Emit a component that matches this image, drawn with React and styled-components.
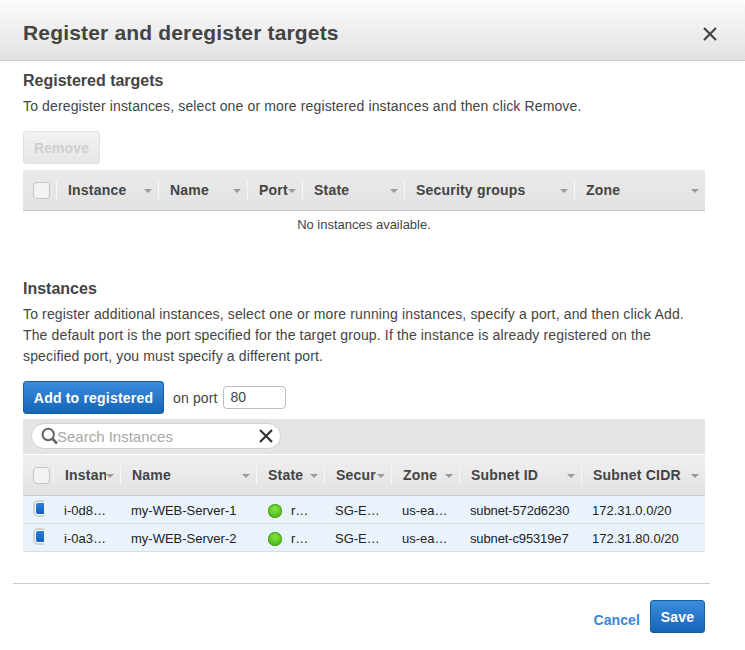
import React from "react"
import styled, { createGlobalStyle } from "styled-components"

const GlobalStyle = createGlobalStyle`
    html, body {
        margin: 0;
        padding: 0;
        background: #fff;
        font-family: "Liberation Sans", Arial, sans-serif;
        color: #444;
    }
`

const Modal = styled.div`
    width: 745px;
    height: 650px;
    overflow: hidden;
    background: #fff;
    display: flex;
    flex-direction: column;
`

const Header = styled.div`
    height: 60px;
    box-sizing: content-box;
    border-bottom: 1px solid #ccc;
    border-radius: 6px 6px 0 0;
    background: linear-gradient(to bottom, #fbfbfb, #e2e2e2);
    padding: 0 23px;
    display: flex;
    align-items: center;
    justify-content: space-between;
`

const Title = styled.h2`
    margin: 6px 0 0;
    font-size: 21px;
    font-weight: 700;
    line-height: 24px;
    letter-spacing: 0.17px;
    color: #444;
`

const Close = styled.svg`
    width: 14px;
    height: 14px;
    margin: 7px 5px 0 0;
`

const Body = styled.div`
    padding: 9px 40px 0 23px;
    width: 682px;
    box-sizing: content-box;
`

const Heading = styled.h3`
    margin: 0;
    padding-top: 1px;
    font-size: 16px;
    line-height: 20px;
    font-weight: 700;
    color: #444;
`

const Text = styled.p`
    margin: 5px 0 0;
    font-size: 14px;
    line-height: 21px;
    letter-spacing: 0.14px;
    color: #444;
`

const RemoveButton = styled.button`
    display: block;
    width: 77px;
    height: 33px;
    margin: 14px 0 6px;
    padding: 0;
    border: 1px solid #e0e0e0;
    border-radius: 3px;
    background: linear-gradient(to bottom, #f2f2f2, #e6e6e6);
    color: #cfcfcf;
    font: 700 14px "Liberation Sans", Arial, sans-serif;
    letter-spacing: 0.1px;
`

const HeadRow = styled.div`
    display: grid;
    grid-template-columns: ${(props) => props.$cols};
    height: 40px;
    box-sizing: content-box;
    align-items: center;
    border-bottom: 1px solid #c8c8c8;
    background: ${(props) => props.$plain
        ? "linear-gradient(to bottom, #f0f0f0, #e2e2e2)"
        : "linear-gradient(to bottom, #eaeaea, #e2e2e2)"};
`

const HeadCell = styled.div`
    position: relative;
    height: 18px;
    display: flex;
    align-items: center;
    box-sizing: border-box;
    padding-left: 11px;
    border-right: 1px solid #f7f7f7;
    min-width: 0;

    &:last-child {
        border-right: none;
    }
`

const HeadLabel = styled.span`
    font-size: 14px;
    line-height: 18px;
    font-weight: 700;
    letter-spacing: 0.2px;
    color: #444;
    white-space: nowrap;
    overflow: hidden;
    max-width: ${(props) => (props.$clip ? `${props.$clip}px` : "none")};
`

const Caret = styled.span`
    position: absolute;
    right: 6px;
    top: 8px;
    width: 0;
    height: 0;
    border-left: 4px solid transparent;
    border-right: 4px solid transparent;
    border-top: 4px solid #9a9a9a;
`

const CheckCell = styled.div`
    height: 18px;
    padding-left: 10px;
    border-right: 1px solid #f7f7f7;
    display: flex;
    align-items: center;
`

const Checkbox = styled.span`
    display: block;
    width: 17px;
    height: 17px;
    box-sizing: border-box;
    border: 1px solid #c4c4c4;
    border-radius: 4px;
    background: #f3f3f3;
`

const EmptyRow = styled.div`
    text-align: center;
    font-size: 13px;
    line-height: 16px;
    padding-top: 6px;
    margin-bottom: 45px;
    color: #444;
`

const ActionRow = styled.div`
    display: flex;
    align-items: center;
    margin-top: 14px;
`

const AddButton = styled.button`
    width: 141px;
    height: 33px;
    padding: 0;
    border: 1px solid #15609f;
    border-radius: 3px;
    background: linear-gradient(to bottom, #3b8cdb, #1565b8);
    color: #fff;
    font: 700 14px "Liberation Sans", Arial, sans-serif;
    letter-spacing: 0.2px;
`

const PortLabel = styled.span`
    margin-left: 9px;
    font-size: 14px;
    letter-spacing: 0.14px;
    color: #444;
`

const PortInput = styled.div`
    margin-left: 5px;
    width: 63px;
    height: 23px;
    box-sizing: border-box;
    border: 1px solid #bdbdbd;
    border-radius: 4px;
    padding: 0 7px;
    font-size: 14px;
    line-height: 21px;
    color: #444;
`

const SearchBar = styled.div`
    margin-top: 5px;
    height: 31px;
    background: #e4e4e4;
    border-bottom: 1px solid #fff;
    padding: 4px 0 0 8px;
    box-sizing: content-box;
`

const SearchBox = styled.div`
    width: 250px;
    height: 26px;
    box-sizing: border-box;
    background: #fff;
    border: 1px solid #d0d0d0;
    border-radius: 13px;
    padding: 0 7px 0 9px;
    display: flex;
    align-items: center;
`

const SearchIcon = styled.svg`
    width: 16px;
    height: 18px;
    flex: none;
    overflow: visible;
`

const SearchText = styled.span`
    flex: 1;
    font-size: 15px;
    color: #a8a8a8;
`

const DataRow = styled.div`
    display: grid;
    grid-template-columns: ${(props) => props.$cols};
    height: 27px;
    box-sizing: content-box;
    align-items: center;
    background: #eaf2fc;
    border-bottom: 1px solid #d9dfe6;
`

const DataCell = styled.div`
    padding-left: ${(props) => props.$pad || 10}px;
    padding-top: 2px;
    font-size: 13px;
    letter-spacing: ${(props) => (props.$tight ? "-0.13px" : "normal")};
    color: #222;
    white-space: nowrap;
    overflow: hidden;
    min-width: 0;
    display: flex;
    align-items: center;
`

const SelectedBox = styled.span`
    display: block;
    width: 17px;
    height: 17px;
    flex: none;
    box-sizing: border-box;
    border: 2px solid #cfd3d8;
    border-radius: 5px;
    padding: 1px;
    background: #f4f7fb;

    &::before {
        content: "";
        display: block;
        width: 100%;
        height: 100%;
        border-radius: 2px;
        background: linear-gradient(to bottom, #2a80dc, #1160b8);
    }
`

const CheckClip = styled.div`
    width: 11px;
    margin: -2px 0 0 10px;
    overflow: hidden;
`

const StatusDot = styled.span`
    flex: none;
    width: 14px;
    height: 14px;
    border-radius: 50%;
    margin-right: 9px;
    background: radial-gradient(circle at 50% 35%, #86e53f, #45b516 80%);
    box-shadow: inset 0 0 0 1px #4fa820;
`

const Divider = styled.div`
    margin: 31px 0 0 13px;
    width: 697px;
    height: 1px;
    background: #ccc;
`

const Footer = styled.div`
    display: flex;
    justify-content: flex-end;
    align-items: center;
    padding: 16px 40px 0 0;
`

const CancelLink = styled.a`
    margin: 7px 10px 0 0;
    font-size: 14px;
    font-weight: 700;
    letter-spacing: 0.1px;
    color: #3b86d8;
`

const SaveButton = styled(AddButton)`
    width: 55px;
`

const topCols = "34px 102px 89px 55px 102px 170px 130px"
const topHead = ["Instance", "Name", "Port", "State", "Security groups", "Zone"]

const bottomCols = "31px 67px 136px 68px 67px 68px 122px 123px"
const bottomHead = [
    { label: "Instan", clip: 41 },
    { label: "Name" },
    { label: "State" },
    { label: "Secur" },
    { label: "Zone" },
    { label: "Subnet ID" },
    { label: "Subnet CIDR" },
]

const instances = [
    { id: "i-0d8…", name: "my-WEB-Server-1", subnet: "subnet-572d6230", cidr: "172.31.0.0/20" },
    { id: "i-0a3…", name: "my-WEB-Server-2", subnet: "subnet-c95319e7", cidr: "172.31.80.0/20" },
]

const App = () => {
    return (
        <Modal>
            <GlobalStyle />
            <Header>
                <Title>Register and deregister targets</Title>
                <Close viewBox="0 0 14 14">
                    <path d="M1 1 L13 13 M13 1 L1 13" stroke="#444" strokeWidth="2.2" fill="none" />
                </Close>
            </Header>
            <Body>
                <Heading>Registered targets</Heading>
                <Text>To deregister instances, select one or more registered instances and then click Remove.</Text>
                <RemoveButton>Remove</RemoveButton>
                <HeadRow $cols={topCols}>
                    <CheckCell><Checkbox /></CheckCell>
                    {topHead.map((label) => (
                        <HeadCell key={label}>
                            <HeadLabel>{label}</HeadLabel>
                            <Caret />
                        </HeadCell>
                    ))}
                </HeadRow>
                <EmptyRow>No instances available.</EmptyRow>

                <Heading>Instances</Heading>
                <Text>
                    To register additional instances, select one or more running instances, specify a port, and then click Add.
                    <br />
                    The default port is the port specified for the target group. If the instance is already registered on the
                    <br />
                    specified port, you must specify a different port.
                </Text>
                <ActionRow>
                    <AddButton>Add to registered</AddButton>
                    <PortLabel>on port</PortLabel>
                    <PortInput>80</PortInput>
                </ActionRow>
                <SearchBar>
                    <SearchBox>
                        <SearchIcon viewBox="0 0 16 18">
                            <circle cx="7.2" cy="7.5" r="5.7" stroke="#666" strokeWidth="2" fill="none" />
                            <path d="M11.2 11.5 L16 16.5" stroke="#666" strokeWidth="2.6" />
                        </SearchIcon>
                        <SearchText>Search Instances</SearchText>
                        <svg width="14" height="14" viewBox="0 0 14 14">
                            <path d="M1 1 L13 13 M13 1 L1 13" stroke="#333" strokeWidth="2.2" fill="none" />
                        </svg>
                    </SearchBox>
                </SearchBar>
                <HeadRow $cols={bottomCols} $plain>
                    <CheckCell><Checkbox /></CheckCell>
                    {bottomHead.map((col) => (
                        <HeadCell key={col.label}>
                            <HeadLabel $clip={col.clip}>{col.label}</HeadLabel>
                            <Caret />
                        </HeadCell>
                    ))}
                </HeadRow>
                {instances.map((row) => (
                    <DataRow key={row.id} $cols={bottomCols}>
                        <CheckClip><SelectedBox /></CheckClip>
                        <DataCell>{row.id}</DataCell>
                        <DataCell>{row.name}</DataCell>
                        <DataCell $pad={11}><StatusDot />r…</DataCell>
                        <DataCell>SG-E…</DataCell>
                        <DataCell>us-ea…</DataCell>
                        <DataCell $tight>{row.subnet}</DataCell>
                        <DataCell>{row.cidr}</DataCell>
                    </DataRow>
                ))}
            </Body>
            <Divider />
            <Footer>
                <CancelLink>Cancel</CancelLink>
                <SaveButton>Save</SaveButton>
            </Footer>
        </Modal>
    )
}

export default App
